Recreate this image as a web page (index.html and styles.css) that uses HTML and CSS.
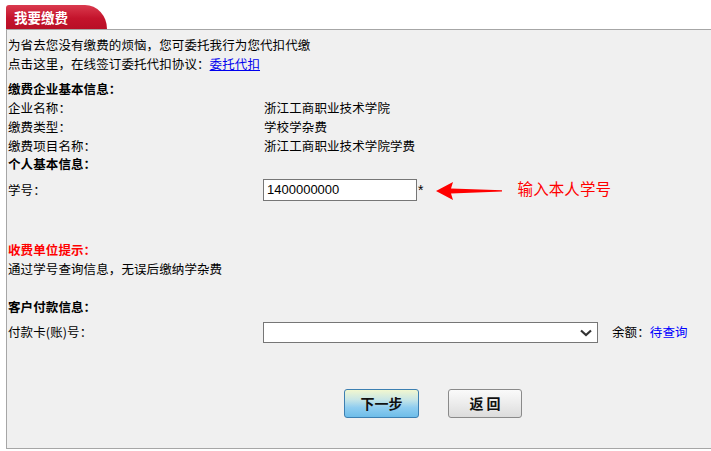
FILE: index.html
```html
<!DOCTYPE html>
<html lang="zh-CN">
<head>
    <meta charset="UTF-8">
    <title>我要缴费</title>
    <link rel="stylesheet" href="styles.css">
</head>
<body>
    <div class="page">
        <div class="tab">我要缴费</div>
        <div class="panel">
            <p class="intro">为省去您没有缴费的烦恼，您可委托我行为您代扣代缴<br>点击这里，在线签订委托代扣协议：<a href="#">委托代扣</a></p>
            <h3 class="sect first">缴费企业基本信息：</h3>
            <div class="row"><span class="label">企业名称：</span><span class="val">浙江工商职业技术学院</span></div>
            <div class="row"><span class="label">缴费类型：</span><span class="val">学校学杂费</span></div>
            <div class="row"><span class="label">缴费项目名称：</span><span class="val">浙江工商职业技术学院学费</span></div>
            <h3 class="sect">个人基本信息：</h3>
            <div class="row field">
                <span class="label">学号：</span>
                <input class="num" type="text" value="1400000000">
                <span class="star">*</span>
                <svg class="arrow" width="66" height="20" viewBox="0 0 66 20">
                    <path d="M0 10 L17 1 L15 7.5 L66 9.3 L66 10.4 L15 12.5 L17 19 Z" fill="#ff0000"/>
                </svg>
                <span class="tip">输入本人学号</span>
            </div>
            <h3 class="sect notice">收费单位提示：</h3>
            <p class="line">通过学号查询信息，无误后缴纳学杂费</p>
            <h3 class="sect pay">客户付款信息：</h3>
            <div class="row field card">
                <span class="label">付款卡(账)号：</span>
                <span class="sel">
                    <select><option></option></select>
                    <svg class="chev" width="12" height="8" viewBox="0 0 12 8">
                        <path d="M1 1.5 L6 6 L11 1.5" fill="none" stroke="#333" stroke-width="2.2"/>
                    </svg>
                </span>
                <span class="bal">余额：<a href="#">待查询</a></span>
            </div>
            <div class="btns">
                <button class="btn next">下一步</button>
                <button class="btn back">返 回</button>
            </div>
        </div>
    </div>
</body>
</html>
```

FILE: styles.css
```css
*{
    margin: 0;
    padding: 0;
    box-sizing: border-box;
}
body{
    background: #fff;
    font-family: "Noto Sans CJK SC", "Liberation Sans", sans-serif;
    font-size: 12.5px;
    color: #000;
}
.page{
    padding: 5px 0 0 6px;
}
.tab{
    width: 101px;
    height: 24px;
    padding-left: 8px;
    line-height: 24px;
    font-size: 13.5px;
    font-weight: bold;
    color: #fff;
    background: linear-gradient(#da3a4e, #c4142c 55%, #b80f26);
    border-radius: 3px 22px 0 0 / 3px 24px 0 0;
}
.panel{
    height: 420px;
    padding: 6px 0 0 1px;
    background: #f0f0f0;
    border: 1px solid #a6a6a6;
    border-right: none;
}
.intro, .line, .row, .sect{
    line-height: 18.7px;
    letter-spacing: 0.1px;
}
.intro a{
    color: #0000ee;
}
.sect{
    font-size: 12.5px;
    font-weight: bold;
}
.sect.first{
    margin-top: 7px;
}
.sect.notice{
    margin-top: 40px;
    color: #ff0000;
}
.sect.pay{
    margin-top: 19.6px;
}
.row{
    display: flex;
    align-items: center;
}
.label{
    width: 255px;
    flex: none;
}
.val{
    padding-left: 1px;
}
.field{
    margin-top: 5px;
    height: 22px;
}
.num{
    width: 154px;
    height: 22px;
    padding: 0 3px;
    border: 1px solid #767676;
    background: #fff;
    font-family: "Liberation Sans", sans-serif;
    font-size: 13px;
    color: #000;
    outline: none;
}
.star{
    margin-left: 1px;
    font-family: "Liberation Sans", sans-serif;
    font-size: 14px;
}
.arrow{
    margin-left: 12px;
    margin-top: 2px;
}
.tip{
    margin-left: 16px;
    margin-top: -4px;
    font-size: 15.5px;
    color: #ff0000;
}
.card{
    height: 21px;
}
.sel{
    position: relative;
    display: block;
    width: 335px;
    height: 21px;
}
.sel select{
    display: block;
    width: 100%;
    height: 21px;
    appearance: none;
    background: #fff;
    border: 1px solid #767676;
    border-radius: 0;
}
.chev{
    position: absolute;
    right: 6px;
    top: 7px;
}
.bal{
    margin-left: 14px;
}
.bal a{
    color: #0000ff;
    text-decoration: none;
}
.btns{
    display: flex;
    gap: 29px;
    margin-top: 46px;
    padding-left: 336px;
}
.btn{
    width: 75px;
    height: 29px;
    border-radius: 3px;
    font-family: "Noto Sans CJK SC", sans-serif;
    font-size: 14px;
    font-weight: bold;
    color: #111;
}
.next{
    border: 1px solid #3c7fb1;
    background: linear-gradient(#f2f7cf, #c8e6e6 35%, #8fcdf0 65%, #6ebde9);
}
.back{
    width: 74px;
    border: 1px solid #8a8a8a;
    background: linear-gradient(#fafafa, #ececec 50%, #dcdcdc);
}
```
